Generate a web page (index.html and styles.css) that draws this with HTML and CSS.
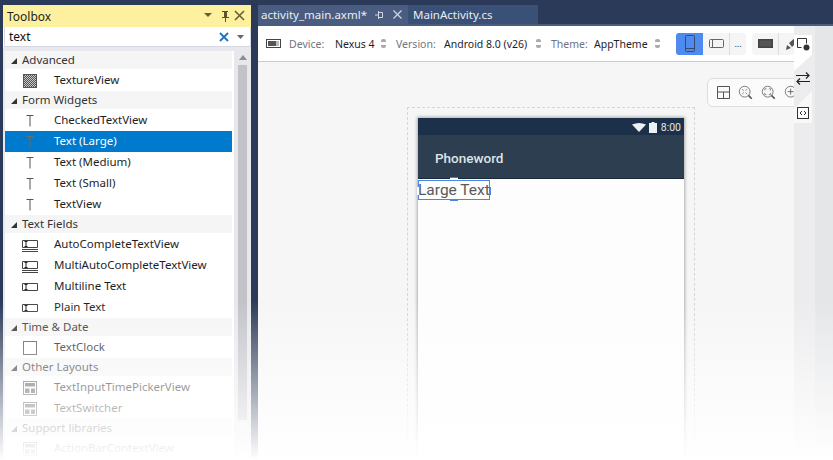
FILE: index.html
```html
<!DOCTYPE html>
<html lang="en">
<head>
<meta charset="utf-8">
<title>Toolbox</title>
<link rel="stylesheet" href="styles.css">
</head>
<body>
<svg class="defs" width="0" height="0" aria-hidden="true">
  <pattern id="chk" width="2" height="2" patternUnits="userSpaceOnUse"><rect width="2" height="2" fill="#c8c8c8"/><rect width="1" height="1" fill="#555"/><rect x="1" y="1" width="1" height="1" fill="#555"/></pattern>
  <symbol id="i-t" viewBox="0 0 16 16"><path d="M4.500 2.500h7M8 2.500v11" fill="none" stroke="currentColor"/></symbol>
  <symbol id="i-tex" viewBox="0 0 16 16"><rect x="1.500" y="1.500" width="13" height="13" fill="url(#chk)" stroke="#555"/></symbol>
  <symbol id="i-box" viewBox="0 0 16 16"><rect x="1.500" y="1.500" width="13" height="13" fill="#fff" stroke="#555"/></symbol>
  <symbol id="i-area" viewBox="0 0 16 16"><path d="M.5 3.500h15v7H.5zM0 12.500h16M0 14.500h16" fill="none" stroke="#444"/><path d="M2.500 4.500h3M4 4.500v5M2.500 9.500h3" fill="none" stroke="#222"/></symbol>
  <symbol id="i-field" viewBox="0 0 16 16"><path d="M.5 4.500h15v7H.5z" fill="none" stroke="#444"/><path d="M2.500 5.500h3M4 5.500v5M2.500 10.500h3" fill="none" stroke="#222"/></symbol>
  <symbol id="i-lay" viewBox="0 0 16 16"><rect x="1.500" y="1.500" width="13" height="13" fill="#fff" stroke="#555"/><path d="M3 3h10v3.500H3zM3 8.500h4.500V13H3zM9 8.500h4V13H9z" fill="#555"/></symbol>
</svg>
<div class="app">
  <aside class="toolbox">
    <header class="tb-title">
      <span class="tb-name">Toolbox</span>
      <svg class="tb-ctl" width="44" height="14" viewBox="0 0 44 14"><path d="M2 4h8l-4 4z" fill="#6b5d35"/><path d="M20 2h6v1h-1v5h2v1h-3v4h-1V9h-3V8h2V3h-2z" fill="#5c5333"/><path d="M33 2l9 9M42 2l-9 9" stroke="#6b5d35" stroke-width="1.600" fill="none"/></svg>
    </header>
    <div class="tb-search">
      <span class="tb-query">text</span>
      <svg width="10" height="10" viewBox="0 0 10 10"><path d="M1 1l8 8M9 1l-8 8" stroke="#1b75c4" stroke-width="1.800"/></svg>
      <svg class="tb-drop" width="7" height="4" viewBox="0 0 7 4"><path d="M0 0h7L3.500 4z" fill="#666"/></svg>
    </div>
    <div class="tb-body">
      <ul class="tb-list">
        <li class="tb-head"><i class="tri"></i>Advanced</li>
        <li class="tb-item"><svg class="ic"><use href="#i-tex"/></svg>TextureView</li>
        <li class="tb-head"><i class="tri"></i>Form Widgets</li>
        <li class="tb-item"><svg class="ic"><use href="#i-t"/></svg>CheckedTextView</li>
        <li class="tb-item sel"><svg class="ic"><use href="#i-t"/></svg>Text (Large)</li>
        <li class="tb-item"><svg class="ic"><use href="#i-t"/></svg>Text (Medium)</li>
        <li class="tb-item"><svg class="ic"><use href="#i-t"/></svg>Text (Small)</li>
        <li class="tb-item"><svg class="ic"><use href="#i-t"/></svg>TextView</li>
        <li class="tb-head"><i class="tri"></i>Text Fields</li>
        <li class="tb-item"><svg class="ic"><use href="#i-area"/></svg>AutoCompleteTextView</li>
        <li class="tb-item"><svg class="ic"><use href="#i-area"/></svg>MultiAutoCompleteTextView</li>
        <li class="tb-item"><svg class="ic"><use href="#i-field"/></svg>Multiline Text</li>
        <li class="tb-item"><svg class="ic"><use href="#i-field"/></svg>Plain Text</li>
        <li class="tb-head"><i class="tri"></i>Time &amp; Date</li>
        <li class="tb-item"><svg class="ic"><use href="#i-box"/></svg>TextClock</li>
        <li class="tb-head"><i class="tri"></i>Other Layouts</li>
        <li class="tb-item"><svg class="ic"><use href="#i-lay"/></svg>TextInputTimePickerView</li>
        <li class="tb-item"><svg class="ic"><use href="#i-lay"/></svg>TextSwitcher</li>
        <li class="tb-head"><i class="tri"></i>Support libraries</li>
        <li class="tb-item"><svg class="ic"><use href="#i-lay"/></svg>ActionBarContextView</li>
      </ul>
      <div class="tb-scroll"><i class="sc-up"></i><i class="sc-thumb"></i></div>
    </div>
  </aside>

  <main class="editor">
    <nav class="tabs">
      <div class="tab active">
        <span class="tab-name">activity_main.axml*</span>
        <svg width="10" height="10" viewBox="0 0 10 10"><path d="M0 5h3M3.500 2.500h4v5h-4zM3.500 1v8" fill="none" stroke="#cfd6e2"/></svg>
        <svg width="9" height="9" viewBox="0 0 9 9"><path d="M.5.500l8 8M8.500.500l-8 8" stroke="#cfd6e2" stroke-width="1.200"/></svg>
      </div>
      <div class="tab">MainActivity.cs</div>
    </nav>
    <div class="ed-row">
      <div class="ed-col">
        <div class="toolbar">
          <svg class="tool-dev" width="15" height="9" viewBox="0 0 15 9"><rect x=".5" y=".5" width="14" height="8" fill="#fff" stroke="#444"/><rect x="2" y="2" width="8" height="5" fill="#555"/><rect x="10" y="2" width="3" height="5" fill="#bbb"/></svg>
          <span class="lbl l-dev">Device:</span><span class="val v-dev">Nexus 4</span><i class="updown"></i>
          <span class="lbl l-ver">Version:</span><span class="val v-ver">Android 8.0 (v26)</span><i class="updown"></i>
          <span class="lbl l-thm">Theme:</span><span class="val v-thm">AppTheme</span><i class="updown"></i>
          <div class="seg seg-a">
            <span class="seg-on"><svg width="10" height="17" viewBox="0 0 10 17"><rect x=".5" y=".5" width="9" height="16" rx="1" fill="none" stroke="#3a4a66"/><path d="M1 13.500h8" stroke="#3a4a66"/></svg></span>
            <span class="seg-cell"><svg width="15" height="9" viewBox="0 0 15 9"><rect x=".5" y=".5" width="14" height="8" rx="1" fill="none" stroke="#666"/><path d="M3.500 1v7" stroke="#666"/></svg></span>
            <span class="seg-more">...</span>
          </div>
          <div class="seg seg-b">
            <span class="seg-cell"><svg width="15" height="9" viewBox="0 0 15 9"><rect x=".75" y=".75" width="13.500" height="7.500" fill="#555" stroke="#444" stroke-width="1.500"/></svg></span>
            <span class="seg-cell pen"><svg width="12" height="12" viewBox="0 0 12 12"><path d="M0 12l1-5 4 3zM3 5l6-5 3 3-6 6z" fill="#555"/></svg></span>
          </div>
        </div>
        <div class="canvas">
          <div class="zoombar">
            <svg width="13" height="13" viewBox="0 0 13 13"><path d="M.5.500h12v12H.5zM.5 6h12M6.500 6v7" fill="none" stroke="#555"/></svg>
            <svg width="15" height="15" viewBox="0 0 18 18"><circle cx="8" cy="8" r="6.500" fill="#f8f8f8" stroke="#666"/><path d="M12.500 12.500l4 4" stroke="#555" stroke-width="2"/><path d="M5 5l2 2M11 5L9 7M5 11l2-2M11 11L9 9" stroke="#777"/></svg>
            <svg width="15" height="15" viewBox="0 0 18 18"><circle cx="8" cy="8" r="6.500" fill="#f8f8f8" stroke="#666"/><path d="M12.500 12.500l4 4" stroke="#555" stroke-width="2"/><path d="M4.500 6.500v-2h2M9.500 4.500h2v2M11.500 9.500v2h-2M6.500 11.500h-2v-2" fill="none" stroke="#777"/></svg>
            <svg width="15" height="15" viewBox="0 0 18 18"><circle cx="8" cy="8" r="6.500" fill="#f8f8f8" stroke="#666"/><path d="M12.500 12.500l4 4" stroke="#555" stroke-width="2"/><path d="M4.500 8h7M8 4.500v7" stroke="#555"/></svg>
          </div>
          <div class="stage">
            <div class="phone">
              <div class="status">
                <svg width="14" height="9" viewBox="0 0 14 9"><path d="M0 1.500Q7-1.500 14 1.500L7 9z" fill="#eef1f4"/></svg>
                <svg width="8" height="11" viewBox="0 0 8 11"><path d="M2.500 0h3v1H8v10H0V1h2.500z" fill="#eef1f4"/></svg>
                <span class="clock">8:00</span>
              </div>
              <div class="appbar">Phoneword</div>
              <div class="screen">
                <div class="picked">Large Text<i class="hd hd-t"></i><i class="hd hd-b"></i><i class="hd hd-l"></i><i class="hd hd-r"></i></div>
              </div>
            </div>
          </div>
        </div>
      </div>
      <div class="rail">
        <div class="rail-col">
          <div class="rail-tab first"><svg width="13" height="13" viewBox="0 0 13 13"><path d="M.5 9.500V.5h9v5M.5 9.500h4" fill="none" stroke="#333"/><circle cx="9.500" cy="9.500" r="3" fill="#333"/></svg></div>
          <div class="rail-mid"><svg width="14" height="13" viewBox="0 0 14 13"><path d="M0 3.500h13M10 .5l3 3-3 3M14 9.500H1M4 6.500l-3 3 3 3" fill="none" stroke="#222" stroke-width="1.200"/></svg></div>
          <div class="rail-tab last"><svg width="12" height="12" viewBox="0 0 12 12"><rect x=".5" y=".5" width="11" height="11" fill="#fff" stroke="#333"/><path d="M5 4L3 6l2 2M7 4l2 2-2 2" fill="none" stroke="#333"/></svg></div>
        </div>
        <div class="rail-edge"></div>
      </div>
    </div>
  </main>
</div>
<div class="fade"></div>
</body>
</html>
```

FILE: styles.css
```css
* { box-sizing: border-box; }
html, body { margin: 0; height: 100%; overflow: hidden; }
body { background: #2a3a58; font-family: "Noto Sans", "Open Sans", sans-serif; font-size: 11.500px; color: #1e1e1e; position: relative; }
.defs { position: absolute; }
.app { display: flex; height: 460px; padding: 5px 0 0 3px; }
.fade { position: absolute; inset: 300px 0 0 0; background: linear-gradient(rgba(255,255,255,0), #fff); pointer-events: none; }

.toolbox { width: 248px; height: 460px; background: #fff; margin-right: 7px; flex: none; }
.tb-title { height: 22px; background: #fdf1a0; display: flex; align-items: center; justify-content: space-between; padding: 0 5px 0 4px; font-size: 12px; color: #1e1e1e; }
.tb-ctl { flex: none; }
.tb-search { height: 20px; margin: 0 0 0 1px; display: flex; align-items: center; padding: 0 5px 0 4px; background: #fff; border: 1px solid #d5d9e2; border-top: 0; }
.tb-query { flex: 1; font-size: 12px; color: #111; }
.tb-drop { margin-left: 8px; margin-right: 1px; }
.tb-body { display: flex; background: #fff; border-top: 4px solid #e8e9ee; border-left: 2px solid #e8e9ee; }
.tb-list { list-style: none; margin: 0; padding: 0; width: 227px; flex: none; }
.tb-head { height: 18px; margin-bottom: 1px; padding: 0 0 2px 6px; background: #f5f5f5; display: flex; align-items: center; color: #333; }
.tri { width: 0; height: 0; border-style: solid; border-width: 0 0 6px 6px; border-color: transparent transparent #333 transparent; margin-right: 5px; margin-top: 4px; }
.tb-item { height: 21px; display: flex; align-items: center; padding: 0 0 2px 17px; color: #1e1e1e; }
.ic { width: 16px; height: 16px; margin: 2px 16px 0 0; color: #555; flex: none; }
.sel { background: #007acc; color: #fff; }
.sel .ic { color: #7a6a50; }
.tb-scroll { width: 17px; margin-left: 2px; background: #e8e8ec; padding: 4px 4px 0; display: flex; flex-direction: column; align-items: center; height: 410px; }
.sc-up { width: 0; height: 0; border-style: solid; border-width: 0 4px 5px; border-color: transparent transparent #8a8d93; margin-bottom: 5px; flex: none; }
.sc-thumb { width: 9px; height: 355px; background: #c2c3c9; flex: none; }

.editor { flex: 1; min-width: 0; display: flex; flex-direction: column; height: 455px; }
.tabs { display: flex; height: 21px; border-bottom: 2px solid #4a5d80; flex: none; }
.tab { display: flex; align-items: center; height: 19px; width: 130px; padding-left: 5px; background: #3a5076; color: #e8edf5; font-size: 11.500px; }
.tab.active { width: 150px; background: #4a5d80; padding-left: 3px; gap: 8px; }
.ed-row { flex: 1; display: flex; min-height: 0; }
.ed-col { width: 536px; flex: none; display: flex; flex-direction: column; min-width: 0; }

.toolbar { height: 36px; background: #fff; border-bottom: 1px solid #ccc; display: flex; align-items: center; padding-left: 8px; font-size: 10.500px; overflow: hidden; flex: none; white-space: nowrap; }
.tool-dev { flex: none; margin-right: 8px; }
.lbl { color: #6f7480; flex: none; }
.val { color: #1e1e2e; flex: none; }
.l-dev { width: 46px; }
.v-dev { width: 46px; }
.l-ver { width: 48px; margin-left: 10px; }
.v-ver { width: 92px; }
.l-thm { width: 43px; margin-left: 10px; }
.v-thm { width: 61px; }
.updown { width: 5px; height: 9px; flex: none; background: linear-gradient(#aaa 0 3px, transparent 3px 6px, #aaa 6px); border-radius: 2px; }
.seg { display: flex; align-items: center; height: 22px; background: #f5f5f6; border-radius: 4px; flex: none; }
.seg-a { margin-left: 16px; width: 70px; }
.seg-b { margin-left: 6px; width: 60px; }
.seg-on { width: 27px; height: 22px; background: #4f8aef; border-radius: 3px 0 0 3px; display: flex; align-items: center; justify-content: center; }
.seg-cell { width: 27px; height: 22px; display: flex; align-items: center; justify-content: center; border-right: 1px solid #ddd; }
.seg-cell.pen { justify-content: flex-start; padding-left: 7px; border-right: 0; }
.seg-more { flex: 1; text-align: center; font-size: 9px; color: #333; line-height: 14px; }

.canvas { flex: 1; position: relative; background: #f6f6f6; overflow: hidden; padding: 45px 0 0 149px; }
.zoombar { position: absolute; top: 16px; left: 449px; width: 100px; height: 29px; background: #fbfbfb; border: 1px solid #dedede; border-radius: 6px; display: flex; align-items: center; gap: 8px; padding-left: 9px; }
.zoombar svg { flex: none; }
.stage { width: 288px; height: 420px; border: 1px dashed #d6d6d6; padding: 10px; }
.phone { width: 266px; height: 420px; box-shadow: 0 0 3px 1px #aaa; display: flex; flex-direction: column; background: #fdfdfd; }
.status { height: 17px; background: #1c3149; display: flex; align-items: center; justify-content: flex-end; gap: 3px; padding: 1px 3px 0 0; color: #e4e8ec; font-family: Roboto, sans-serif; font-size: 10.500px; }
.clock { margin-left: 1px; padding-top: 1px; }
.appbar { height: 44px; background: #2c3e50; border-bottom: 1px solid #1c2a38; color: #dfe3e8; font-family: Roboto, sans-serif; font-weight: 500; font-size: 13.500px; line-height: 46px; padding-left: 17px; }
.screen { flex: 1; background: #fdfdfd; padding-top: 1px; }
.picked { position: relative; width: 72px; height: 20px; border: 1px solid #4a86e8; font-family: Roboto, sans-serif; font-size: 15.500px; line-height: 19px; text-indent: -1px; color: #5a5a5a; white-space: nowrap; }
.hd { position: absolute; background: #4a86e8; }
.hd-t { left: 31px; top: -3px; width: 8px; height: 2px; background: #fff; box-shadow: 0 -1px #777; }
.hd-b { left: 31px; bottom: -2px; width: 8px; height: 2px; }
.hd-l { left: -2px; top: 6px; width: 2px; height: 8px; background: #fff; }
.hd-r { right: -2px; top: 6px; width: 2px; height: 8px; }

.rail { flex: 1; display: flex; }
.rail-col { width: 21px; flex: none; background: #ececee; display: flex; flex-direction: column; }
.rail-edge { flex: 1; background: #e5e6e8; }
.rail-tab { background: #fff; display: flex; justify-content: center; width: 18px; }
.rail-tab.first { height: 36px; margin-top: 9px; padding-top: 3px; clip-path: polygon(0 0, 100% 0, 100% 55%, 0 100%); }
.rail-mid { height: 20px; display: flex; align-items: center; justify-content: center; width: 18px; padding-bottom: 6px; }
.rail-tab.last { height: 32px; background: #f8f8f8; align-items: center; clip-path: polygon(100% 0, 100% 100%, 0 100%, 0 55%); padding-top: 12px; }
```
